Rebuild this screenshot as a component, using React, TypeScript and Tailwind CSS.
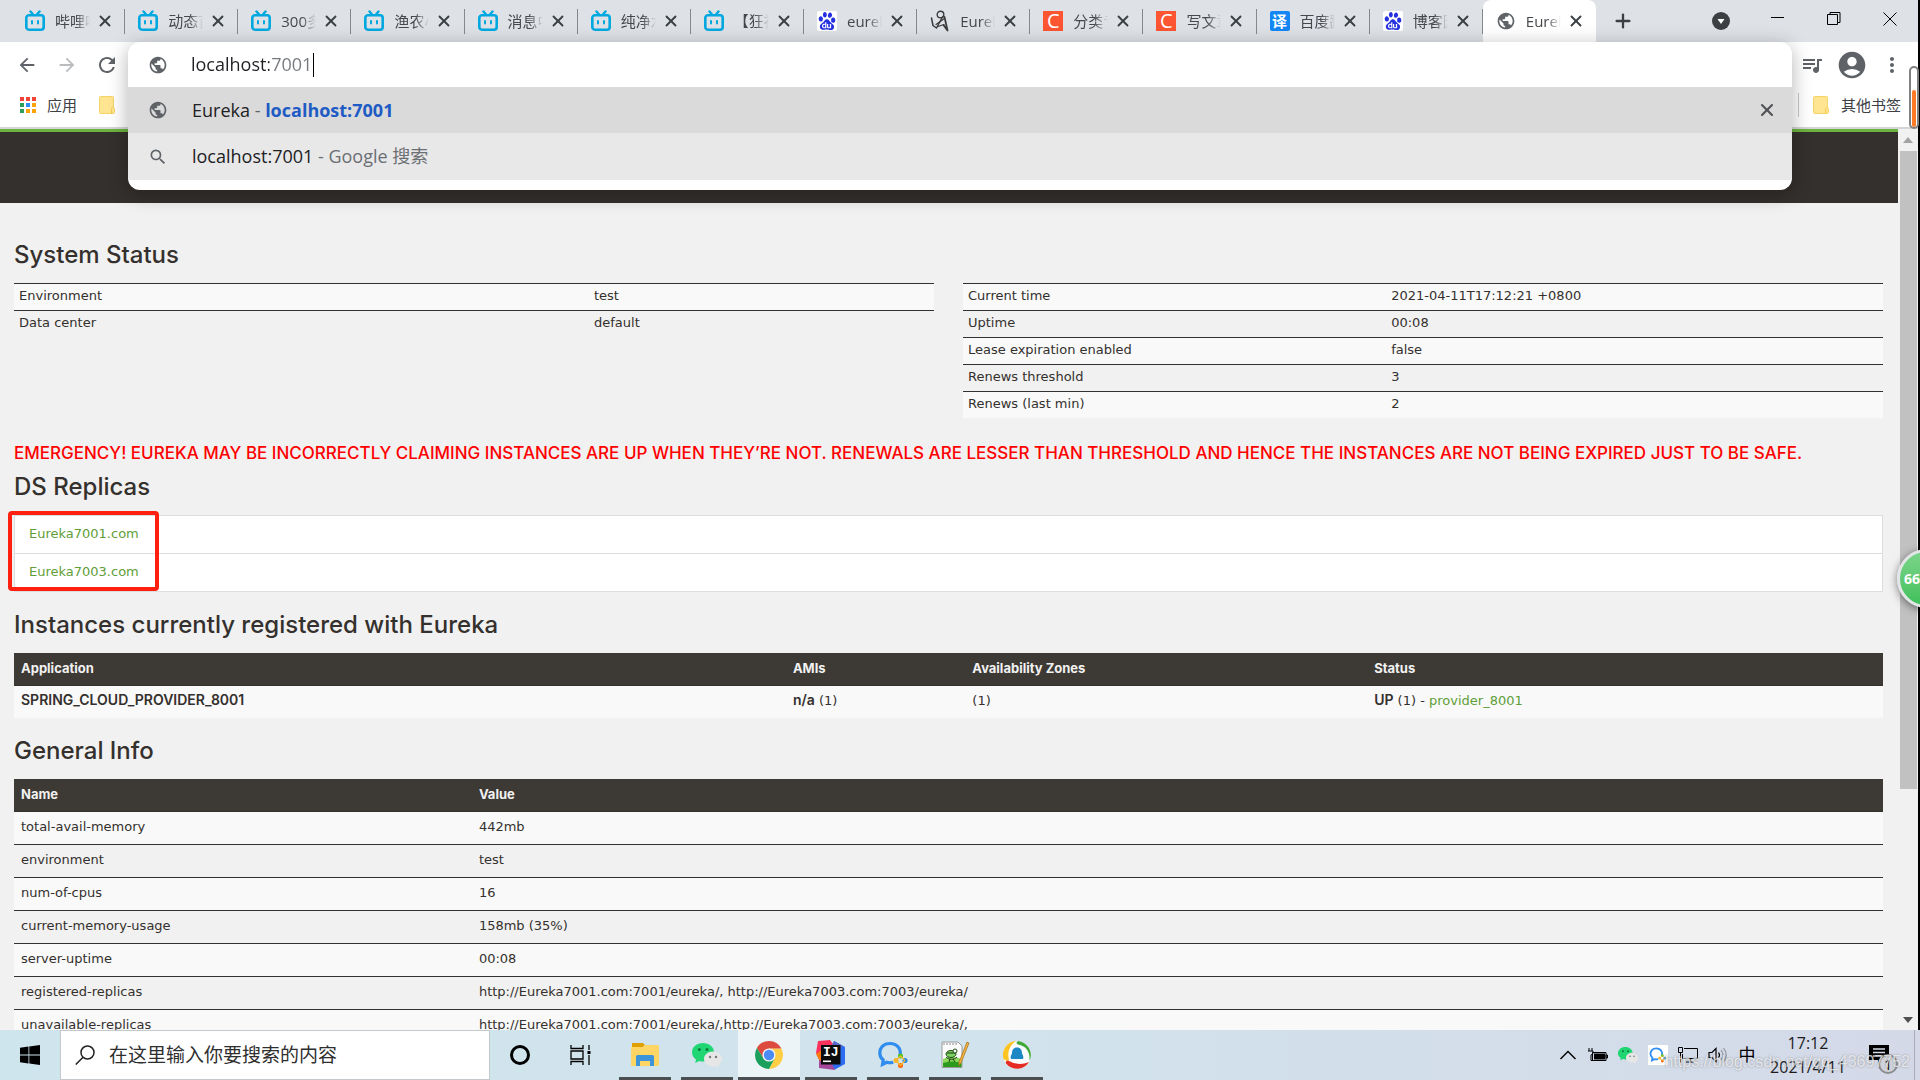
import type { ReactNode } from "react";
import { Plus, X } from "lucide-react";
import {
  MdAccountCircle,
  MdArrowBack,
  MdArrowForward,
  MdMoreVert,
  MdPublic,
  MdQueueMusic,
  MdRefresh,
  MdSearch,
} from "react-icons/md";
import { SiBaidu } from "react-icons/si";

type TabProps = {
  title: string;
  icon: ReactNode;
  active?: boolean;
};

type Pair = [string, string];

function BiliIcon() {
  return (
    <svg viewBox="0 0 20 22" className="h-[22px] w-5" fill="none" stroke="#00a8e0" strokeLinecap="round">
      <path d="M5.5 1.5 8 4.5M14.5 1.5 12 4.5" strokeWidth="2.4" />
      <rect x="1.3" y="5.3" width="17.4" height="14.4" rx="2.6" strokeWidth="2.6" />
      <path d="M7 11v2.4M13 11v2.4" strokeWidth="2" />
    </svg>
  );
}

function BaiduIcon() {
  return (
    <span className="flex size-5 items-center justify-center rounded-xs bg-white">
      <SiBaidu className="size-[18px] text-[#2530e0]" />
    </span>
  );
}

function ScribbleIcon() {
  return (
    <svg viewBox="0 0 20 22" className="h-[22px] w-5" fill="none" stroke="#3c3c3c" strokeLinecap="round" strokeLinejoin="round">
      <circle cx="10.5" cy="4.5" r="3.3" strokeWidth="1.4" />
      <path d="M1.5 8 3 15.500 6.500 18 12.800 6.500" strokeWidth="1.5" />
      <path d="M6 14.500 14.500 8.500M8 16.500 14 14.500" strokeWidth="1.2" />
      <path d="M14.500 7 17.500 20.500 13.500 15" strokeWidth="1.8" />
    </svg>
  );
}

function LetterIcon({ text, className }: { text: string; className: string }) {
  return (
    <span className={`flex size-5 items-center justify-center leading-none text-white ${className}`}>
      {text}
    </span>
  );
}

function FolderIcon() {
  return (
    <svg viewBox="0 0 16 18" className="h-[18px] w-4">
      <path d="M1.500.5h12q1 0 1 1v10l1 1v3.500q0 1.500-1.500 1.500H1.500q-1 0-1-1v-15q0-1 1-1z" fill="#ffe591" stroke="#f5d467" />
      <path d="M14.500 11.500c-1.500 0-2 .8-2 2v4" fill="none" stroke="#f0c94c" />
    </svg>
  );
}

function AppsIcon() {
  const colors = ["#f04438", "#f04438", "#f04438", "#2f9e58", "#2f8ef4", "#fba409", "#2f9e58", "#fba409", "#fba409"];
  return (
    <span className="grid grid-cols-3 gap-[2px]">
      {colors.map((color, i) => (
        <span key={i} className="size-1" style={{ backgroundColor: color }} />
      ))}
    </span>
  );
}

function WeChatIcon({ className }: { className: string }) {
  return (
    <svg viewBox="0 0 30 24" className={className}>
      <path d="M11 0C4.800 0 0 4 0 9.300c0 3 1.500 5.500 4 7.200L3.200 20l4-2c1.200.4 2.500.6 3.800.6 6.200 0 11-4 11-9.300S17.200 0 11 0z" fill="#1fd672" />
      <circle cx="7.400" cy="6.500" r="1.500" fill="#0c7a3d" />
      <circle cx="15" cy="6.500" r="1.500" fill="#0c7a3d" />
      <path d="M21 8.500c-5 0-9 3.300-9 7.500s4 7.500 9 7.500c1 0 2-.1 3-.4l3.200 1.400-.6-2.800c2-1.300 3.400-3.400 3.400-5.700 0-4.200-4-7.500-9-7.500z" fill="#e6e6e6" />
      <circle cx="18" cy="14" r="1.200" fill="#777" />
      <circle cx="24" cy="14" r="1.200" fill="#777" />
    </svg>
  );
}

function ExplorerIcon() {
  return (
    <svg viewBox="0 0 28 24" className="h-6 w-7">
      <path d="M1 0h11l2 2-2 2H1z" fill="#e0a000" />
      <path d="M0 4h12l1.500-2H27a1 1 0 0 1 1 1v19a1 1 0 0 1-1 1H1a1 1 0 0 1-1-1z" fill="#ffd563" />
      <path d="M5 23V13.500q0-1.500 1.500-1.500h15q1.500 0 1.500 1.500V23h-4v-5H9v5z" fill="#3d94d9" />
    </svg>
  );
}

function ChromeIcon() {
  return (
    <svg viewBox="0 0 28 28" className="size-7">
      <path d="M14 7.500h12.400A14 14 0 0 1 14 28l5.600-10.700z" fill="#ffce44" />
      <path d="M8.400 17.300 1.880 7A14 14 0 0 1 26.400 7.500H14z" fill="#dd4b3e" />
      <path d="M1.880 7A14 14 0 0 0 14 28l5.600-10.700H8.400z" fill="#1b9f5d" />
      <circle cx="14" cy="14" r="6.600" fill="#f2f2f2" />
      <circle cx="14" cy="14" r="5.200" fill="#4b8bf5" />
    </svg>
  );
}

function IdeaIcon() {
  return (
    <svg viewBox="0 0 30 30" className="size-[30px]">
      <path d="M2 1 14 0l6 8L6 22 0 13z" fill="#fe315d" />
      <path d="M0 14 7 9l4 12-7 1z" fill="#f97a12" />
      <path d="m18 1 11 6v17L18 30l-4-8z" fill="#2b6cf0" />
      <path d="m18 1 9 5-6 6-6-5z" fill="#5668c8" />
      <path d="M3 20 16 24l3 6L3 28z" fill="#a6479b" />
      <rect x="5" y="5" width="19.500" height="19.500" fill="#0c0c0c" />
      <text x="7" y="16" fontSize="13" fontWeight="700" fill="#fff" fontFamily="Liberation Mono, monospace">IJ</text>
      <rect x="7" y="20.500" width="8" height="1.600" fill="#fff" />
    </svg>
  );
}

function WeComIcon({ className }: { className: string }) {
  return (
    <svg viewBox="0 0 30 28" className={className}>
      <path d="M22 14c1.500-6-3-11.500-10-11.500S1.800 7 1.800 12c0 3 1.300 5.300 3.400 7L4.500 23.500l4.300-2.200c2.200.6 4.400.6 6.400 0" fill="none" stroke="#2f8df0" strokeWidth="3.200" />
      <circle cx="22.500" cy="15" r="2.500" fill="#55c21f" />
      <circle cx="27" cy="19.500" r="2.500" fill="#1e86ea" />
      <circle cx="22.500" cy="24.500" r="2.500" fill="#fb6500" />
      <circle cx="18" cy="19.500" r="2.500" fill="#f8b62d" />
      <path d="m22.500 15 4.500 4.500-4.500 5-4.500-5z" fill="none" stroke="#f8b62d" strokeWidth="1.200" />
    </svg>
  );
}

function NotepadIcon() {
  return (
    <svg viewBox="0 0 30 28" className="h-7 w-[30px]">
      <path d="M2 1h16l4 4v21.500H2z" fill="#fbfbfb" stroke="#9a9a9a" />
      <path d="M3 18q9-4 18.500 0v8H3z" fill="#8ad858" />
      <path d="M3 22q9-3 18.500 0v4H3z" fill="#2d9a1d" />
      <path d="M4 2v2M7 2v2M10 2v2M13 2v2M16 2v2" stroke="#888" />
      <ellipse cx="11" cy="13" rx="5" ry="3.500" fill="#7bd05f" stroke="#1e4e14" />
      <path d="M6 16c3 3 8 3 11 0M10 18l-1 3M13 18l2 3M7 12h8" fill="none" stroke="#1e3a18" />
      <circle cx="15" cy="10" r="2" fill="#fff" stroke="#1e4e14" />
      <path d="m27 1 2 1-8 20-2 2.500V21z" fill="#f3b33c" stroke="#a56a1c" strokeWidth=".7" />
    </svg>
  );
}

function PenguinIcon() {
  return (
    <svg viewBox="0 0 30 30" className="size-[30px]">
      <circle cx="15" cy="15" r="14" fill="#f9fbfc" />
      <path d="M14 1A14 14 0 0 0 1.500 19q3 3 5.500 1Q4 8 14 1z" fill="#fcc524" />
      <path d="M16 1A14 14 0 0 1 27.500 21q1-14-11.500-16.500Q13 3 16 1z" fill="#43a83b" />
      <path d="M27 22A14 14 0 0 1 4 23.500q-1-3 2-3 10 6 21 1.500z" fill="#e52b23" />
      <path d="M15 7.500c-3.500 0-5 2.500-5 6-1 2-2 4-.8 5.500h11.600c1.200-1.500.2-3.500-.8-5.500 0-3.500-1.500-6-5-6z" fill="#1b87c4" />
    </svg>
  );
}

function Tab({ title, icon, active }: TabProps) {
  return (
    <div
      className={`relative flex min-w-0 flex-1 items-center pl-[13px] ${active ? "rounded-t-lg bg-white" : ""}`}
    >
      <span className="flex w-5 shrink-0 justify-center">{icon}</span>
      <button className="ml-[10px] w-[35px] overflow-hidden text-left text-[15px] whitespace-nowrap text-[#45484c] [mask-image:linear-gradient(to_right,black_60%,transparent)]">
        {title}
      </button>
      <button aria-label={`关闭 ${title}`} className="ml-[6px] text-[#3c4043]">
        <X className="size-[18px]" strokeWidth={2.5} />
      </button>
      {!active && <span className="absolute top-[9px] right-0 h-[25px] w-px bg-[#85888c]" />}
    </div>
  );
}

const tabs: TabProps[] = [
  { title: "哔哩哔", icon: <BiliIcon /> },
  { title: "动态首", icon: <BiliIcon /> },
  { title: "300多", icon: <BiliIcon /> },
  { title: "渔农小", icon: <BiliIcon /> },
  { title: "消息中", icon: <BiliIcon /> },
  { title: "纯净水", icon: <BiliIcon /> },
  { title: "【狂神", icon: <BiliIcon /> },
  { title: "eurek", icon: <BaiduIcon /> },
  { title: "Eurek", icon: <ScribbleIcon /> },
  { title: "分类专", icon: <LetterIcon text="C" className="bg-[#fc5531] text-[20px]" /> },
  { title: "写文章", icon: <LetterIcon text="C" className="bg-[#fc5531] text-[20px]" /> },
  { title: "百度翻", icon: <LetterIcon text="译" className="rounded-xs bg-[#1487f5] text-[15px] font-bold" /> },
  { title: "博客园", icon: <BaiduIcon /> },
  { title: "Eurek", icon: <MdPublic className="size-5 text-[#5f6368]" />, active: true },
];

function TabStrip() {
  return (
    <header className="flex h-[42px] bg-[#dee1e6] pl-3">
      <nav className="flex w-[1584px]">
        {tabs.map((tab, i) => (
          <Tab key={i} {...tab} />
        ))}
      </nav>
      <button aria-label="新标签页" className="ml-4 text-[#3c4043]">
        <Plus className="size-[22px]" strokeWidth={2.5} />
      </button>
      <div className="ml-auto flex items-center">
        <button aria-label="搜索标签页" className="mr-[11px] flex size-9 items-center justify-center">
          <svg viewBox="0 0 18 18" className="size-[18px]">
            <circle cx="9" cy="9" r="9" fill="#3c4043" />
            <path d="M5.500 7h7L9 12z" fill="#fff" />
          </svg>
        </button>
        <button aria-label="最小化" className="flex h-9 w-14 items-center justify-center">
          <svg viewBox="0 0 14 14" className="size-[14px]" stroke="#000">
            <path d="M0 3.500h13" />
          </svg>
        </button>
        <button aria-label="还原" className="flex h-9 w-14 items-center justify-center pb-1">
          <svg viewBox="0 0 14 14" className="size-[14px]" fill="none" stroke="#000">
            <path d="M.5 2.500h10v10H.5zM3 2.500v-2h10v10h-2.500" />
          </svg>
        </button>
        <button aria-label="关闭" className="flex h-9 w-14 items-center justify-center pb-1">
          <svg viewBox="0 0 14 14" className="size-[14px]" stroke="#000">
            <path d="m.5.5 13 13M13.500.5l-13 13" />
          </svg>
        </button>
      </div>
    </header>
  );
}

function Omnibox() {
  return (
    <form className="absolute inset-x-0 top-0 z-10 rounded-xl bg-white pb-[10px] text-[18px] text-[#202124] shadow-[0_4px_20px_rgba(0,0,0,0.3)]">
      <div className="flex h-[45px] items-center pl-5">
        <MdPublic className="size-5 text-[#5f6368]" />
        <input
          aria-label="地址"
          defaultValue="localhost:7001"
          className="ml-[23px] w-[122px] bg-linear-to-r from-[#202124] from-[78px] to-[#75797e] to-[78px] bg-clip-text text-transparent outline-none"
        />
        <span className="h-6 w-px bg-black" />
      </div>
      <ul>
        <li className="flex h-[46px] items-center bg-[#dadada] pl-5">
          <MdPublic className="size-5 text-[#5f6368]" />
          <span className="ml-6 whitespace-pre">
            Eureka <span className="text-[#5f6368]">-</span>{" "}
            <b className="font-bold text-[#1f5bc4]">localhost:7001</b>
          </span>
          <button type="button" aria-label="移除建议" className="mr-[15px] ml-auto text-[#505357]">
            <X className="size-5" strokeWidth={2.5} />
          </button>
        </li>
        <li className="flex h-[47px] items-center bg-[#e8e8e8] pl-5">
          <MdSearch className="size-5 text-[#5f6368]" />
          <span className="ml-6 whitespace-pre">
            localhost:7001 <span className="text-[#6b6f74]">- Google 搜索</span>
          </span>
        </li>
      </ul>
    </form>
  );
}

function Toolbar() {
  return (
    <div className="border-b-2 border-[#d3d5d9] bg-white text-[#5f6368]">
      <div className="flex h-[45px]">
        <div className="flex w-32 items-center pl-[7px]">
          <button aria-label="后退" className="flex w-10 justify-center">
            <MdArrowBack className="size-[22px]" />
          </button>
          <button aria-label="前进" className="flex w-10 justify-center text-[#babcbe]">
            <MdArrowForward className="size-[22px]" />
          </button>
          <button aria-label="刷新" className="flex w-10 justify-center">
            <MdRefresh className="size-6" />
          </button>
        </div>
        <div className="relative flex-1">
          <Omnibox />
        </div>
        <div className="flex w-[126px] items-center">
          <button aria-label="媒体控件" className="flex w-10 justify-center">
            <MdQueueMusic className="size-6" />
          </button>
          <button aria-label="用户" className="flex w-10 justify-center">
            <MdAccountCircle className="size-8" />
          </button>
          <button aria-label="菜单" className="flex w-10 justify-center">
            <MdMoreVert className="size-6" />
          </button>
        </div>
      </div>
      <div className="flex h-10 items-center pr-[17px] pb-1 pl-5 text-[15px] text-[#3c4043]">
        <button className="flex items-center gap-[11px]">
          <AppsIcon />
          应用
        </button>
        <button aria-label="文件夹" className="ml-[22px]">
          <FolderIcon />
        </button>
        <span className="ml-auto h-6 w-px bg-[#c6c8cb]" />
        <button className="ml-[14px] flex items-center gap-3">
          <FolderIcon />
          其他书签
        </button>
      </div>
    </div>
  );
}

const leftStatus: Pair[] = [
  ["Environment", "test"],
  ["Data center", "default"],
];

const rightStatus: Pair[] = [
  ["Current time", "2021-04-11T17:12:21 +0800"],
  ["Uptime", "00:08"],
  ["Lease expiration enabled", "false"],
  ["Renews threshold", "3"],
  ["Renews (last min)", "2"],
];

const generalInfo: Pair[] = [
  ["total-avail-memory", "442mb"],
  ["environment", "test"],
  ["num-of-cpus", "16"],
  ["current-memory-usage", "158mb (35%)"],
  ["server-uptime", "00:08"],
  ["registered-replicas", "http://Eureka7001.com:7001/eureka/, http://Eureka7003.com:7003/eureka/"],
  ["unavailable-replicas", "http://Eureka7001.com:7001/eureka/,http://Eureka7003.com:7003/eureka/,"],
];

function StatusTable({ rows, firstCol }: { rows: Pair[]; firstCol: string }) {
  return (
    <div className="flex-1">
      <table className="w-full table-fixed border-separate border-spacing-0">
        <tbody>
          {rows.map(([name, value]) => (
            <tr key={name} className="odd:bg-[#f9f9f9]">
              <td className={`border-t border-[#34302d] px-[5px] pt-1 pb-[6px] ${firstCol}`}>{name}</td>
              <td className="border-t border-[#34302d] px-[5px] pt-1 pb-[6px]">{value}</td>
            </tr>
          ))}
        </tbody>
      </table>
    </div>
  );
}

function Heading({ children, className = "" }: { children: ReactNode; className?: string }) {
  return (
    <h2 className={`mb-[13px] font-['Inter',sans-serif] text-[24px] leading-[30px] font-medium text-[#34302d] ${className}`}>
      {children}
    </h2>
  );
}

function Th({ children, className = "" }: { children: ReactNode; className?: string }) {
  return (
    <th className={`px-[7px] pt-[7px] pb-[9px] text-left font-['Inter',sans-serif] font-bold text-[#f1f1f1] ${className}`}>
      {children}
    </th>
  );
}

function Td({ children }: { children: ReactNode }) {
  return <td className="border-t border-[#34302d] px-[7px] pt-[7px] pb-[9px]">{children}</td>;
}

function Strong({ children }: { children: ReactNode }) {
  return <b className="font-['Inter',sans-serif] text-[14px] leading-3 font-semibold">{children}</b>;
}

function EurekaPage() {
  return (
    <main className="min-w-0 flex-1 overflow-hidden bg-[#f1f1f1] font-['DejaVu_Sans',sans-serif] text-[13px] leading-4 text-[#34302d]">
      <div className="h-[74px] border-t-[3px] border-[#6db33f] bg-[#34302d]" />
      <div className="pr-[15px] pl-[14px]">
        <Heading className="mt-[37px]">System Status</Heading>
        <div className="flex gap-[29px]">
          <StatusTable rows={leftStatus} firstCol="w-[62.5%]" />
          <StatusTable rows={rightStatus} firstCol="w-[46%]" />
        </div>

        <p className="mt-[23px] mb-[7px] font-['Inter',sans-serif] text-[17px] leading-6 font-medium text-[#ff0000]">
          EMERGENCY! EUREKA MAY BE INCORRECTLY CLAIMING INSTANCES ARE UP WHEN THEY’RE NOT. RENEWALS ARE LESSER THAN
          THRESHOLD AND HENCE THE INSTANCES ARE NOT BEING EXPIRED JUST TO BE SAFE.
        </p>

        <Heading>DS Replicas</Heading>
        <div className="relative">
          <ul className="divide-y divide-[#dddddd] border border-[#dddddd] bg-white">
            {["Eureka7001.com", "Eureka7003.com"].map((host) => (
              <li key={host} className="px-[14px] pt-[10px] pb-[11px]">
                <a href="#" className="text-[#5f9e38]">
                  {host}
                </a>
              </li>
            ))}
          </ul>
          <div className="absolute -top-1 -left-[6px] h-[80px] w-[151px] rounded-sm border-4 border-[#ff2010]" />
        </div>

        <Heading className="mt-[18px]">Instances currently registered with Eureka</Heading>
        <table className="w-full table-fixed border-separate border-spacing-0">
          <thead>
            <tr className="bg-[#3d3934]">
              <Th className="w-[41.3%]">Application</Th>
              <Th className="w-[9.6%]">AMIs</Th>
              <Th className="w-[21.5%]">Availability Zones</Th>
              <Th>Status</Th>
            </tr>
          </thead>
          <tbody>
            <tr className="bg-[#f9f9f9]">
              <Td>
                <Strong>SPRING_CLOUD_PROVIDER_8001</Strong>
              </Td>
              <Td>
                <Strong>n/a</Strong> (1)
              </Td>
              <Td>(1)</Td>
              <Td>
                <Strong>UP</Strong> (1) -{" "}
                <a href="#" className="text-[#5f9e38]">
                  provider_8001
                </a>
              </Td>
            </tr>
          </tbody>
        </table>

        <Heading className="mt-[18px]">General Info</Heading>
        <table className="w-full table-fixed border-separate border-spacing-0">
          <thead>
            <tr className="bg-[#3d3934]">
              <Th className="w-[24.5%]">Name</Th>
              <Th>Value</Th>
            </tr>
          </thead>
          <tbody>
            {generalInfo.map(([name, value]) => (
              <tr key={name} className="odd:bg-[#f9f9f9]">
                <Td>{name}</Td>
                <Td>{value}</Td>
              </tr>
            ))}
          </tbody>
        </table>
      </div>
    </main>
  );
}

function Scrollbar() {
  return (
    <div className="flex w-5 flex-col items-center bg-[#f1f1f1]">
      <svg viewBox="0 0 10 6" className="my-2 h-[6px] w-[10px]" fill="#a3a3a3">
        <path d="M5 0 10 6H0z" />
      </svg>
      <div className="h-[638px] w-[17px] bg-[#c1c1c1]" />
      <svg viewBox="0 0 10 6" className="mt-auto mb-[7px] h-[6px] w-[10px]" fill="#505050">
        <path d="M0 0h10L5 6z" />
      </svg>
    </div>
  );
}

const taskApps = [
  { name: "文件资源管理器", icon: <ExplorerIcon /> },
  { name: "微信", icon: <WeChatIcon className="h-6 w-[30px]" /> },
  { name: "Chrome", icon: <ChromeIcon />, active: true },
  { name: "IntelliJ IDEA", icon: <IdeaIcon /> },
  { name: "企业微信", icon: <WeComIcon className="h-7 w-[30px]" /> },
  { name: "Notepad++", icon: <NotepadIcon /> },
  { name: "腾讯", icon: <PenguinIcon /> },
];

function Taskbar() {
  return (
    <footer className="relative flex h-[50px] bg-linear-to-r from-[#cfe5ed] via-[#d1e3ec] to-[#d4d9e8]">
      <button aria-label="开始" className="flex w-[60px] items-center justify-center">
        <svg viewBox="0 0 20 20" className="size-5">
          <path d="M0 2.800 8.500 1.600v8H0zM9.300 1.500 20 0v9.600H9.300zM0 10.400h8.500v8L0 17.200zM9.300 10.400H20V20L9.300 18.500z" />
        </svg>
      </button>
      <label className="flex w-[430px] items-center gap-[14px] border border-[#c3c9cc] bg-white pl-[14px]">
        <svg viewBox="0 0 20 20" className="size-5 shrink-0" fill="none" stroke="#222" strokeWidth="1.500">
          <circle cx="12.500" cy="7.500" r="6.500" />
          <path d="M8 12.200.8 19.500" />
        </svg>
        <input
          aria-label="搜索"
          placeholder="在这里输入你要搜索的内容"
          className="min-w-0 flex-1 text-[19px] outline-none placeholder:text-[#2f2f2f]"
        />
      </label>
      <button aria-label="Cortana" className="flex w-[60px] items-center justify-center">
        <span className="size-[20px] rounded-full border-3 border-black" />
      </button>
      <button aria-label="任务视图" className="flex w-[60px] items-center justify-center">
        <svg viewBox="0 0 21 20" className="h-5 w-[21px]" fill="none" stroke="#000" strokeWidth="1.300">
          <path d="M1 0v3.500h12V0M1 20v-3.500h12V20M1 6h12v8H1zM19 0v5M19 10v10" />
          <path d="M17.500 6h3v3h-3z" fill="#000" stroke="none" />
        </svg>
      </button>
      <div className="ml-1 flex">
        {taskApps.map((app) => (
          <button
            key={app.name}
            aria-label={app.name}
            className={`relative flex w-[62px] items-center justify-center ${app.active ? "bg-[#ecf4f8]" : ""}`}
          >
            {app.icon}
            <span className={`absolute bottom-0 h-[3px] bg-[#4b4f52] ${app.active ? "inset-x-0" : "inset-x-[5px]"}`} />
          </button>
        ))}
      </div>

      <div className="ml-auto flex items-center">
        <button aria-label="显示隐藏的图标" className="flex w-[30px] justify-center">
          <svg viewBox="0 0 16 10" className="h-[10px] w-4" fill="none" stroke="#000" strokeWidth="1.400">
            <path d="M.5 9 8 1.500 15.500 9" />
          </svg>
        </button>
        <button aria-label="电源" className="flex w-[30px] justify-center">
          <svg viewBox="0 0 20 14" className="h-[14px] w-5">
            <path d="M4.500 4.500h13.500v8H4.500zM18 7h1.500v3H18z" fill="none" stroke="#000" />
            <path d="M6 5.500h11v6H6z" />
            <path d="M1 0v3M4 0v3M0 3h5v2.500L3 7v5.500h2" fill="none" stroke="#000" />
          </svg>
        </button>
        <button aria-label="微信" className="flex w-[30px] justify-center">
          <WeChatIcon className="h-4 w-5" />
        </button>
        <button aria-label="企业微信" className="flex w-[30px] justify-center">
          <span className="flex size-5 items-center justify-center bg-white">
            <WeComIcon className="h-4 w-[18px]" />
          </span>
        </button>
        <button aria-label="网络" className="flex w-[30px] justify-center">
          <svg viewBox="0 0 20 16" className="h-4 w-5" fill="none" stroke="#000">
            <path d="M6 1.500h13.500v10H4.500V7M.5.500h4v5h-4zM2.500 5.500v10M12 11.500v3M8 15h8" />
          </svg>
        </button>
        <button aria-label="音量" className="flex w-[30px] justify-center">
          <svg viewBox="0 0 20 18" className="h-[18px] w-5" fill="none" stroke="#000" strokeWidth="1.200">
            <path d="M1 6.500h3L8 2.500v13l-4-4H1zM10.500 6.500q2 2.500 0 5" />
            <path d="M13 4q4 5 0 10M15.500 2q5.500 7 0 14" stroke="#8d939a" />
          </svg>
        </button>
        <button className="w-[28px] text-[17px]">中</button>
        <button className="w-[94px] text-[16px] leading-6 text-[#1c1c1c]">
          17:12
          <br />
          2021/4/11
        </button>
        <button aria-label="通知" className="relative ml-[14px] flex w-5">
          <svg viewBox="0 0 20 20" className="size-5">
            <path d="M0 0h20v15h-7l-4 4v-4H0z" />
            <path d="M4 4h12M4 7.500h12M4 11h8" stroke="#d6dcea" strokeWidth="1.300" />
          </svg>
          <span className="absolute top-[9px] left-[9px] flex size-5 items-center justify-center rounded-full border-2 border-[#8a8d92] bg-[#cfd2d8] text-[14px]">
            1
          </span>
        </button>
        <span className="mr-[5px] ml-[25px] h-[50px] w-px bg-[#a8adb8]" />
      </div>
      <span className="pointer-events-none absolute right-[10px] bottom-2 font-['Liberation_Sans',sans-serif] text-[16px] leading-5 text-white/70 [text-shadow:0_0_2px_rgba(90,90,90,0.6)]">
        https://blog.csdn.net/qq_43697752
      </span>
    </footer>
  );
}

export default function App() {
  return (
    <div className="relative flex h-screen flex-col overflow-hidden font-['Open_Sans','Noto_Sans_CJK_SC',sans-serif]">
      <div className="flex min-h-0 flex-1 flex-col border-r-2 border-black">
        <TabStrip />
        <Toolbar />
        <div className="flex min-h-0 flex-1">
          <EurekaPage />
          <Scrollbar />
        </div>
      </div>
      <Taskbar />

      {/* desktop widgets docked to the right edge */}
      <div className="absolute top-[66px] right-px z-20 flex h-[63px] w-[10px] items-end justify-center rounded-full border-2 border-[#808080] bg-white">
        <span className="h-[37px] w-1 rounded-full bg-[#ff7a26]" />
      </div>
      <div className="absolute top-[549px] -right-9 z-20 flex size-[59px] items-center rounded-full border-3 border-[#e3e6e6] bg-linear-to-b from-[#7bd58b] to-[#3fc05a] pl-1 text-[14px] font-bold text-white shadow-[0_2px_8px_rgba(0,0,0,0.5)]">
        66
      </div>
    </div>
  );
}
